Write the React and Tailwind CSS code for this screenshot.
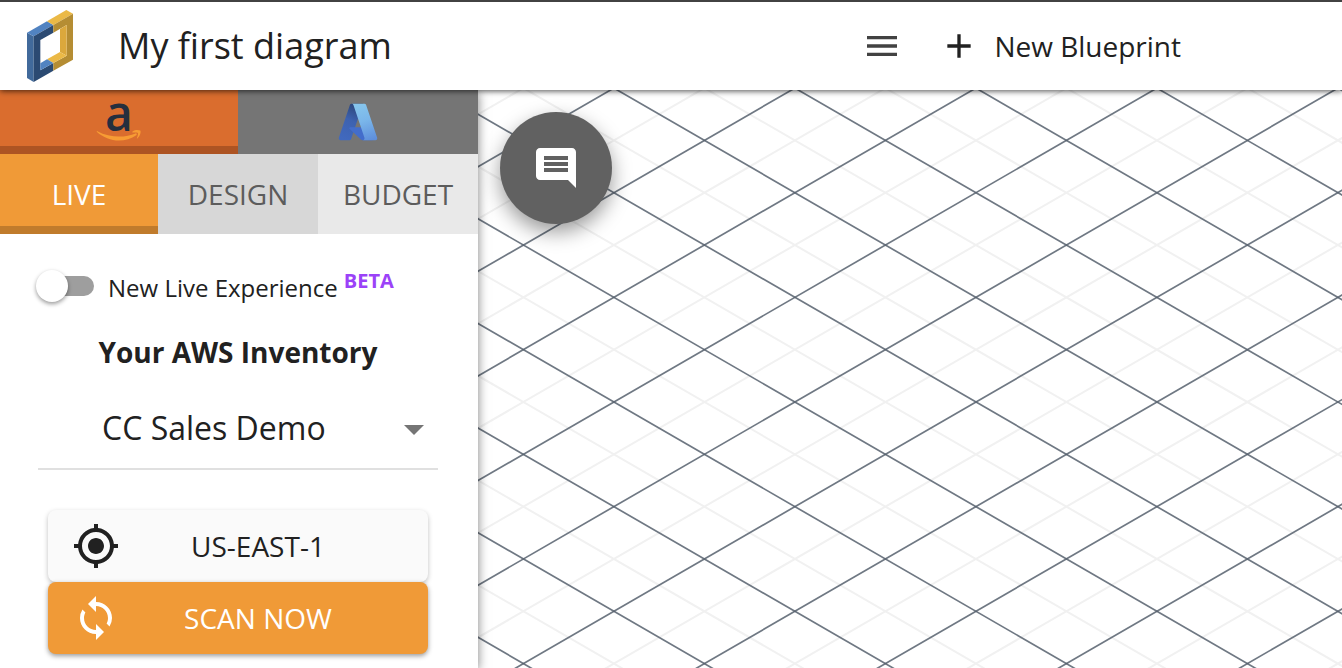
import { useState } from "react";
import {
  MdAdd,
  MdArrowDropDown,
  MdComment,
  MdMenu,
  MdMyLocation,
  MdSync,
} from "react-icons/md";

function BrandLogo() {
  return (
    <svg viewBox="81 30 138 216" className="h-[72px] w-[46px]" aria-hidden="true">
      <polygon points="81,98 101,109 101,246 81,234" fill="#416a9b" />
      <polygon points="81,98 141,64 160,75 101,109" fill="#5183c1" />
      <polygon points="141,64 199,30 219,41 160,75" fill="#ebb946" />
      <polygon points="101,109 160,75 160,98 121,120 121,211 160,189 160,212 101,246" fill="#2b4a72" />
      <polygon points="160,75 219,41 219,179 160,212 160,189 200,167 200,75 160,98" fill="#b58d33" />
      <polygon points="180,87 200,75 200,167 180,156" fill="#dba83c" />
      <polygon points="141,178 180,156 200,167 160,189" fill="#ebb946" />
      <polygon points="121,190 141,178 160,189 121,211" fill="#5183c1" />
    </svg>
  );
}

function AmazonLogo() {
  return (
    <svg viewBox="0 0 46 56" className="h-14 w-[46px] overflow-visible" aria-hidden="true">
      <text x="9" y="41" fill="#252f3e" fontFamily="'Open Sans', sans-serif" fontWeight="600" fontSize="48">
        a
      </text>
      <g transform="translate(0 12)">
        <path d="M1.400 29.200C8 33 16 34.600 23 34.600C29 34.600 35 33.300 39.500 31.400C40.600 31 41.300 32.300 40.300 33.200C35.500 36.800 29 38.600 23 38.600C15 38.600 7 35.400 1 30C.5 29.500 .8 28.900 1.400 29.200Z" fill="#f79c34" />
        <path d="M36.500 29.400C39 27.600 42.500 27.600 44.300 28.600C45.200 30.200 44 34.300 41.600 36.300C41.100 36.700 40.700 36.500 40.900 36C41.700 34 42.500 31.800 41.800 31C41.100 30.200 38.800 30.400 37 30.600C36.400 30.700 36 30 36.500 29.400Z" fill="#f79c34" />
      </g>
    </svg>
  );
}

function AzureLogo() {
  return (
    <svg viewBox="0 0 96 96" className="h-[42px] w-[42px]" aria-hidden="true">
      <defs>
        <linearGradient id="azure-left" x1="60" y1="8" x2="24" y2="90" gradientUnits="userSpaceOnUse">
          <stop offset="0" stopColor="#28406f" />
          <stop offset="0.5" stopColor="#3d62b0" />
          <stop offset="1" stopColor="#4169be" />
        </linearGradient>
        <linearGradient id="azure-right" x1="50" y1="8" x2="78" y2="90" gradientUnits="userSpaceOnUse">
          <stop offset="0" stopColor="#86c5ec" />
          <stop offset="0.45" stopColor="#7ab6ea" />
          <stop offset="1" stopColor="#5e8edb" />
        </linearGradient>
      </defs>
      <path d="M33.338 6.544h26.038l-27.03 80.087a4.152 4.152 0 0 1-3.933 2.824H8.149a4.145 4.145 0 0 1-3.928-5.470L29.404 9.368a4.152 4.152 0 0 1 3.934-2.825z" fill="url(#azure-left)" />
      <path d="M71.175 60.261h-41.290a1.911 1.911 0 0 0-1.305 3.309l26.532 24.764a4.171 4.171 0 0 0 2.846 1.121h23.380z" fill="#436dcb" />
      <path d="M66.595 9.364a4.145 4.145 0 0 0-3.928-2.820H33.648a4.146 4.146 0 0 1 3.928 2.820l25.184 74.620a4.146 4.146 0 0 1-3.928 5.472h29.020a4.146 4.146 0 0 0 3.927-5.472z" fill="url(#azure-right)" />
    </svg>
  );
}

const CELL_W = 181;
const CELL_H = 104.64;
const ORIGIN_X = 226.4;
const ORIGIN_Y = 50.4;
const REACH = 4000;
const RISE = (REACH * CELL_H) / CELL_W;

// Even steps are the main lines, odd steps the faint half-cell lines.
const STEPS = Array.from({ length: 121 }, (_, i) => i - 60);
const ODD = STEPS.filter((n) => n % 2 !== 0);
const EVEN = STEPS.filter((n) => n % 2 === 0);

function parallelLines(steps, rise) {
  return steps
    .map((n) => {
      const y = ORIGIN_Y + (n * CELL_H) / 2;
      return `M${ORIGIN_X - REACH} ${y - rise}L${ORIGIN_X + REACH} ${y + rise}`;
    })
    .join("");
}

function IsoGrid() {
  return (
    <svg className="absolute inset-0 h-full w-full" fill="none" aria-hidden="true">
      <g stroke="#f1f1f1" strokeWidth="2">
        <path d={parallelLines(ODD, RISE)} />
        <path d={parallelLines(ODD, -RISE)} />
      </g>
      <g stroke="#56606d" strokeOpacity="0.85" strokeWidth="1.700">
        <path d={parallelLines(EVEN, RISE)} />
        <path d={parallelLines(EVEN, -RISE)} />
      </g>
    </svg>
  );
}

function Header() {
  return (
    <header className="relative z-20 flex h-[90px] shrink-0 items-center border-t-2 border-[#424242] bg-white pr-[161px] pl-[27px] shadow-[0_1px_6px_rgba(0,0,0,0.7)]">
      <BrandLogo />
      <h1 className="ml-[45px] text-[36px] leading-[48px]">My first diagram</h1>
      <button type="button" aria-label="Menu" className="ml-auto text-[#424242]">
        <MdMenu size={40} />
      </button>
      <button type="button" className="ml-[37px] flex items-center gap-[15px] text-[28px] leading-10">
        <MdAdd size={40} />
        New Blueprint
      </button>
    </header>
  );
}

function Tabs() {
  return (
    <nav>
      <div className="flex h-16">
        <button
          type="button"
          aria-label="AWS"
          className="flex w-[238px] items-center justify-center border-b-8 border-[#ad5423] bg-[#da6d2e]"
        >
          <AmazonLogo />
        </button>
        <button type="button" aria-label="Azure" className="flex flex-1 items-center justify-center bg-[#757575]">
          <AzureLogo />
        </button>
      </div>
      <div className="flex h-20 text-[28px] leading-10 text-[#5c5c5c]">
        <button type="button" className="w-[158px] border-b-8 border-[#c07b2c] bg-[#f09a37] pt-2 text-white">
          LIVE
        </button>
        <button type="button" className="flex-1 bg-[#d7d7d7]">
          DESIGN
        </button>
        <button type="button" className="flex-1 bg-[#e9e9e9]">
          BUDGET
        </button>
      </div>
    </nav>
  );
}

function LiveSwitch() {
  const [on, setOn] = useState(false);
  return (
    <div className="flex h-10 items-center">
      <input
        id="live-switch"
        type="checkbox"
        role="switch"
        checked={on}
        onChange={(e) => setOn(e.target.checked)}
        className="relative h-5 w-14 appearance-none rounded-full bg-[#9e9e9e] before:absolute before:-top-[6px] before:-left-[2px] before:size-8 before:rounded-full before:bg-white before:shadow-[0_2px_4px_rgba(0,0,0,0.4)] checked:bg-[#f09a37] checked:before:left-[26px]"
      />
      <label htmlFor="live-switch" className="ml-[14px] flex pt-1 text-[24px] leading-8">
        New Live Experience
        <strong className="-mt-[7px] ml-[6px] text-[20px] font-bold text-[#9b42f8]">BETA</strong>
      </label>
    </div>
  );
}

function Sidebar() {
  return (
    <aside className="relative z-10 w-[478px] shrink-0 bg-white shadow-[0_2px_10px_rgba(0,0,0,0.5)]">
      <Tabs />
      <div className="pt-8 pr-10 pb-3 pl-[38px]">
        <LiveSwitch />
        <h2 className="mt-[26px] text-center text-[28px] leading-10 font-bold">Your AWS Inventory</h2>
        <div className="mt-4 grid items-center">
          <select
            aria-label="Inventory account"
            className="col-start-1 row-start-1 h-[82px] w-full appearance-none border-b-2 border-[#e0e0e0] bg-transparent pl-16 text-[32px]"
          >
            <option>CC Sales Demo</option>
          </select>
          <MdArrowDropDown
            size={48}
            className="pointer-events-none col-start-1 row-start-1 justify-self-end text-[#757575]"
          />
        </div>
        <div className="mt-10 flex flex-col px-[10px] text-[28px] leading-10">
          <button
            type="button"
            className="flex h-[72px] items-center rounded-lg bg-[#fafafa] pr-8 pl-6 shadow-[0_2px_5px_rgba(0,0,0,0.25)]"
          >
            <MdMyLocation size={48} />
            <span className="flex-1">US-EAST-1</span>
          </button>
          <button
            type="button"
            className="flex h-[72px] items-center rounded-lg bg-[#f09a37] pr-8 pl-6 text-white shadow-[0_2px_5px_rgba(0,0,0,0.4)]"
          >
            <MdSync size={48} />
            <span className="flex-1">SCAN NOW</span>
          </button>
        </div>
      </div>
    </aside>
  );
}

export default function App() {
  return (
    <div className="flex min-h-screen flex-col bg-white font-['Open_Sans',sans-serif] text-[#212121]">
      <Header />
      <div className="flex flex-1">
        <Sidebar />
        <main className="relative flex-1 overflow-hidden p-[22px]">
          <IsoGrid />
          <button
            type="button"
            aria-label="Comments"
            className="relative flex size-28 items-center justify-center rounded-full bg-[#616161] text-white shadow-[0_8px_20px_rgba(0,0,0,0.4)]"
          >
            <MdComment size={48} />
          </button>
        </main>
      </div>
    </div>
  );
}
